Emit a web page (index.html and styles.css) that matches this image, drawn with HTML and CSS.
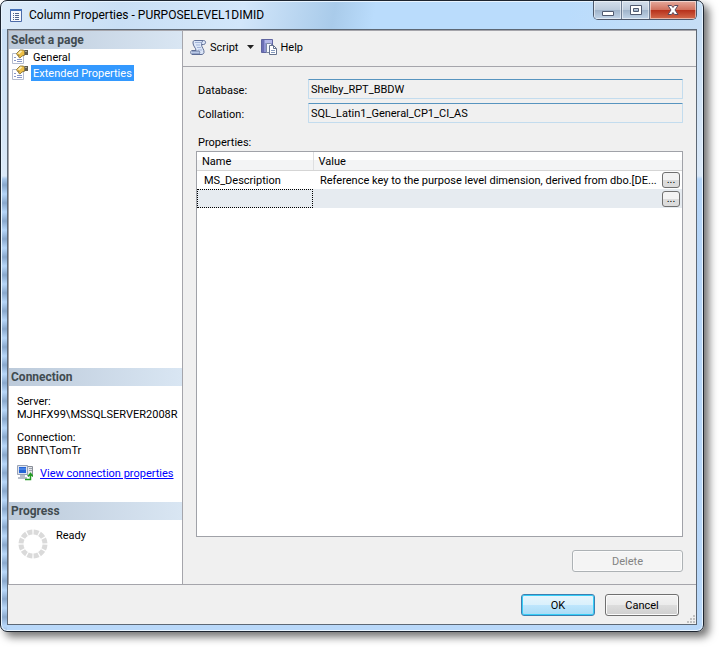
FILE: index.html
```html
<!DOCTYPE html>
<html lang="en">
<head>
    <meta charset="UTF-8">
    <meta name="viewport" content="width=device-width, initial-scale=1.0">
    <title>Column Properties - PURPOSELEVEL1DIMID</title>
    <link rel="stylesheet" href="styles.css">
</head>
<body>
    <!-- page icon, used by each entry of the page list -->
    <svg class="defs" width="0" height="0">
        <symbol id="page-icon" viewBox="0 0 16 16">
            <path d="M.5 4.500h11v10H.5z" fill="#fff" stroke="#b4bccf"/>
            <path d="M2 8.500h2M2 11.500h2M5 10.500h5M5 12.500h5" stroke="#8796c6"/>
            <path d="M4.500 4.500 8 1h3l2 1v4l-3 1-2 2-1.500-1L7 6 5.500 6.500z" fill="#eebf45" stroke="#7c682f" stroke-width=".8"/>
            <path d="M5.500 4.500 8.500 1.500l2 .5L7.500 5z" fill="#fbeeb8"/>
            <path d="M12.500 1H16v5h-3.500z" fill="#5f5b4e"/>
            <path d="M13 2h2v1h-2z" fill="#a8a698"/>
        </symbol>
    </svg>
    <div class="window">
        <header class="titlebar">
            <svg class="app-icon" width="13" height="13" viewBox="0 0 13 13">
                <path d="M.5.5h11v12H.5z" fill="#f7f9fd" stroke="#4c6ba8"/>
                <path d="M0 0h12v2H0z" fill="#4470b8"/>
                <path d="M3 4.500h1M3 6.500h1M3 8.500h1M3 10.500h1M5 4.500h4M5 6.500h4M5 8.500h4M5 10.500h4" stroke="#52658c"/>
            </svg>
            <h1>Column Properties - PURPOSELEVEL1DIMID</h1>
            <div class="caption-buttons">
                <button class="caption" aria-label="Minimize">
                    <svg width="14" height="14" viewBox="0 0 14 14"><path d="M1.500 8.500h11v4h-11z" fill="#fff" stroke="#505a70"/></svg>
                </button>
                <button class="caption" aria-label="Maximize">
                    <svg width="14" height="14" viewBox="0 0 14 14"><path d="M1.500 2.500h11v9h-11zM4.500 5.500h5v3h-5z" fill="#fff" fill-rule="evenodd" stroke="#505a70"/></svg>
                </button>
                <button class="caption close" aria-label="Close">
                    <svg width="14" height="14" viewBox="0 0 14 14"><path d="M2 2.500h3.500L7 4.500l1.500-2H12L9 7l3 4.500H8.500L7 9.500l-1.500 2H2L5 7z" fill="#fff" stroke="#5a4a5c"/></svg>
                </button>
            </div>
        </header>

        <div class="client">
            <div class="main">
                <aside class="sidebar">
                    <section class="pages">
                        <h2>Select a page</h2>
                        <ul>
                            <li><svg width="16" height="16"><use href="#page-icon"/></svg><a href="#general">General</a></li>
                            <li><svg width="16" height="16"><use href="#page-icon"/></svg><a class="selected" href="#extended">Extended Properties</a></li>
                        </ul>
                    </section>
                    <section class="connection">
                        <h2>Connection</h2>
                        <dl>
                            <dt>Server:</dt>
                            <dd>MJHFX99\MSSQLSERVER2008R</dd>
                            <dt>Connection:</dt>
                            <dd>BBNT\TomTr</dd>
                        </dl>
                        <div class="view-link">
                            <svg width="16" height="16" viewBox="0 0 16 16">
                                <path d="M10.500 1.500h5v9h-5z" fill="#e4e6ea" stroke="#8a8f99"/>
                                <path d="M12 3.500h3M12 5.500h3" stroke="#9aa0ac"/>
                                <path d="M.5.5h10v9H.5z" fill="#dfe5ef" stroke="#98a2b5"/>
                                <path d="M2 2h7v6H2z" fill="#2563d6"/>
                                <path d="M2 4h7" stroke="#69a2f4"/>
                                <path d="M3 10h5v2H3zM1 12h9v2H1z" fill="#b9bfca"/>
                                <path d="M8 14.500h5.500V9M11 11.500l2.500-3 2.500 3" fill="none" stroke="#239b23" stroke-width="1.500"/>
                            </svg>
                            <a href="#connection">View connection properties</a>
                        </div>
                    </section>
                    <section class="progress">
                        <h2>Progress</h2>
                        <div class="status">
                            <svg width="30" height="30" viewBox="0 0 30 30">
                                <circle cx="15" cy="15" r="12" pathLength="120" fill="none" stroke="#dadada" stroke-width="5" stroke-dasharray="8 2" stroke-dashoffset="-1"/>
                            </svg>
                            <span>Ready</span>
                        </div>
                    </section>
                </aside>

                <main class="content">
                    <div class="toolbar">
                        <button class="tool">
                            <svg width="17" height="16" viewBox="0 0 17 16">
                                <path d="M4.500 1.500h9c3 0 2.500 4 0 4h-2c0 3 3 5 2.500 8-.3 1.500-1.500 2-3 2H2c-2-1-1.500-4 0-4h4C6 9 3 7 3 4c0-1.500.5-2.500 1.500-2.500z" fill="#dce6f8" stroke="#5c6c94"/>
                                <path d="M5 3.500h6M6 6h4M7 8.500h4M8 11h4" stroke="#a3b5d8"/>
                                <path d="M2 12h7c1 0 1 3 0 3H2M13 2c-1.500.5-1.500 2-1.500 3.500" fill="#b9c9e8" stroke="#5c6c94" stroke-width=".8"/>
                            </svg>
                            Script
                            <svg class="arrow" width="7" height="4" viewBox="0 0 7 4"><path d="M0 0h7L3.500 4z" fill="#222"/></svg>
                        </button>
                        <button class="tool">
                            <svg width="16" height="16" viewBox="0 0 16 16">
                                <path d="M.5.5h11v13H.5z" fill="#8f94d2" stroke="#5f64a0"/>
                                <path d="M1 1h2v12H1z" fill="#6a6fb4"/>
                                <path d="M4 1h7v3H4z" fill="#b4b8e8"/>
                                <path d="M5.500 4.500h4l2 2v7h-6z" fill="#f4f7fc" stroke="#7d8aa6"/>
                                <path d="M8.500 6.500h4l3 3v6h-7z" fill="#fff" stroke="#66738e"/>
                                <path d="M12.500 6.500v3h3" fill="none" stroke="#66738e"/>
                                <path d="M10 11.500h4M10 13.500h4" stroke="#8499bd"/>
                            </svg>
                            Help
                        </button>
                    </div>
                    <form class="properties">
                        <div class="field">
                            <label for="database">Database:</label>
                            <input id="database" type="text" value="Shelby_RPT_BBDW" readonly>
                        </div>
                        <div class="field">
                            <label for="collation">Collation:</label>
                            <input id="collation" type="text" value="SQL_Latin1_General_CP1_CI_AS" readonly>
                        </div>
                        <h3 id="properties-label">Properties:</h3>
                        <div class="grid">
                            <table aria-labelledby="properties-label">
                                <colgroup>
                                    <col class="col-name">
                                    <col>
                                    <col class="col-more">
                                </colgroup>
                                <thead>
                                    <tr><th class="name">Name</th><th colspan="2">Value</th></tr>
                                </thead>
                                <tbody>
                                    <tr>
                                        <td>MS_Description</td>
                                        <td>Reference key to the purpose level dimension, derived from dbo.[DE...</td>
                                        <td class="more"><button type="button">...</button></td>
                                    </tr>
                                    <tr class="new">
                                        <td class="focused"></td>
                                        <td></td>
                                        <td class="more"><button type="button">...</button></td>
                                    </tr>
                                </tbody>
                            </table>
                        </div>
                        <button class="btn delete" type="button" disabled>Delete</button>
                    </form>
                </main>
            </div>

            <footer class="footer">
                <button class="btn ok">OK</button>
                <button class="btn">Cancel</button>
                <svg class="grip" width="8" height="8" viewBox="0 0 8 8">
                    <path d="M6 0h2v2H6zM3 3h2v2H3zM6 3h2v2H6zM0 6h2v2H0zM3 6h2v2H3zM6 6h2v2H6z" fill="#c2c2c2"/>
                </svg>
            </footer>
        </div>
    </div>
</body>
</html>
```

FILE: styles.css
```css
* {
    box-sizing: border-box;
}
body {
    margin: 0;
    padding: 0 16px 16px 0;
    min-height: 100vh;
    display: flex;
    background-color: #fff;
    color: #000;
    font-family: Roboto, "Liberation Sans", Arial, sans-serif;
    font-size: 11px;
    line-height: 13px;
}
h1, h2, h3, ul, dl, dd {
    margin: 0;
    padding: 0;
    font-weight: normal;
}
button, input {
    font: inherit;
    color: inherit;
}
svg {
    flex: none;
}
.defs {
    position: absolute;
}

/* window frame, the glass shows blurred stripes on the left */
.window {
    flex: 1;
    min-width: 0;
    display: flex;
    flex-direction: column;
    padding: 0 6px 6px;
    border: 1px solid #1d2530;
    border-radius: 7px;
    background:
        linear-gradient(100deg, #dcebf9 0, #c9dff5 120px, #d2e6fa 240px, #a9cbea 330px, #badcfc 370px, #badcfc 560px, #c6def5 100%) top / 100% 28px no-repeat,
        repeating-linear-gradient(to bottom, rgba(70, 100, 140, 0) 0, rgba(70, 100, 140, 0.4) 9px, rgba(70, 100, 140, 0) 18px) 0 175px / 6px 100% no-repeat,
        linear-gradient(to bottom, #c4dcf4 0, #dbe9f8 175px, #b5d5f8 178px, #b9d8f9 100%);
    box-shadow: inset 0 0 0 1px #e8f4ff, 5px 5px 9px rgba(0, 0, 0, 0.55);
}
.titlebar {
    height: 28px;
    display: flex;
    align-items: flex-start;
    padding-left: 3px;
}
.app-icon {
    margin-top: 8px;
}
h1 {
    flex: 1;
    margin: 6px 0 0 6px;
    font-family: Roboto, "Open Sans", sans-serif;
    font-size: 12px;
    line-height: 16px;
    white-space: nowrap;
}
.caption-buttons {
    display: flex;
    border: 1px solid #4d586b;
    border-top: 0;
    border-radius: 0 0 5px 5px;
    overflow: hidden;
}
.caption {
    width: 28px;
    height: 18px;
    padding: 0;
    border: 0;
    border-right: 1px solid #6d7c92;
    background: linear-gradient(to bottom, #d4dfec 0, #bccbdc 50%, #9eb2c9 50%, #c2d5e9 100%);
    box-shadow: inset 0 0 0 1px rgba(255, 255, 255, 0.5);
}
.caption svg {
    display: block;
    margin: auto;
}
.caption.close {
    width: 46px;
    border-right: 0;
    background: linear-gradient(to bottom, #e5aa9d 0, #d0705c 50%, #b62f1a 50%, #d46b4c 100%);
}
.client {
    flex: 1;
    display: flex;
    flex-direction: column;
    border: 1px solid #5d6875;
    background-color: #f0f0f0;
}
.main {
    flex: 1;
    display: flex;
    border: 1px solid #a5a5ab;
    border-width: 1px 0;
}

/* left side */
.sidebar {
    width: 175px;
    flex: none;
    display: flex;
    flex-direction: column;
    border: 1px solid #a5a5ab;
    border-width: 0 1px;
    background-color: #fff;
}
.pages {
    flex: 1;
}
.connection {
    height: 134px;
}
.progress {
    height: 82px;
}
h2 {
    height: 18px;
    padding-left: 2px;
    background: linear-gradient(to right, #bccada, #d9e6f3);
    color: #414b50;
    font-size: 12px;
    font-weight: bold;
    line-height: 18px;
}
ul {
    list-style: none;
}
li {
    display: flex;
    height: 16px;
    padding-left: 3px;
    gap: 3px;
}
li a {
    padding: 1px 2px 0;
    color: #000;
    line-height: 15px;
    text-decoration: none;
}
li a.selected {
    background-color: #3399ff;
    color: #fff;
}
dl {
    padding: 9px 3px 0 8px;
}
dd {
    margin-bottom: 10px;
    overflow: hidden;
    white-space: nowrap;
}
dd:last-child {
    margin-bottom: 8px;
}
.view-link {
    display: flex;
    align-items: center;
    gap: 7px;
    padding-left: 8px;
}
.view-link a {
    color: #0000ff;
}
.status {
    display: flex;
    gap: 8px;
    padding: 9px 0 0 9px;
}

/* right side */
.content {
    flex: 1;
    min-width: 0;
    display: flex;
    flex-direction: column;
}
.toolbar {
    height: 36px;
    display: flex;
    align-items: center;
    gap: 7px;
    padding: 0 7px 3px;
    border-bottom: 1px solid #a5a5ab;
}
.tool {
    display: flex;
    align-items: center;
    gap: 3px;
    padding: 0;
    border: 0;
    background: none;
}
.arrow {
    margin-left: 6px;
}
.properties {
    flex: 1;
    display: flex;
    flex-direction: column;
    padding: 12px 13px;
}
.field {
    display: flex;
    align-items: center;
    margin-bottom: 4px;
}
.field label {
    width: 112px;
    flex: none;
    padding: 2px 0 0 2px;
}
.field input {
    flex: 1;
    min-width: 0;
    height: 20px;
    padding: 0 2px;
    border: 1px solid #c3dcee;
    border-top-color: #5794bf;
    border-radius: 1px;
    background-color: #f0f0f0;
}
h3 {
    margin: 9px 0 2px 2px;
    font-size: 11px;
}
.grid {
    flex: 1;
    border: 1px solid #a0a2a8;
    background-color: #fff;
}
table {
    width: 100%;
    border-collapse: collapse;
    table-layout: fixed;
}
.col-name {
    width: 116px;
}
.col-more {
    width: 22px;
}
th {
    height: 18px;
    padding: 1px 5px 0;
    border-bottom: 1px solid #d5d5d5;
    background: linear-gradient(to bottom, #fff 45%, #f3f4f5 45%);
    font-weight: normal;
    text-align: left;
}
th.name {
    border-right: 1px solid #dedfe1;
}
td {
    height: 19px;
    padding: 1px 0 0 7px;
    white-space: nowrap;
}
.new td {
    background-color: #e6ebf0;
}
.new td.focused {
    outline: 1px dotted #000;
    outline-offset: -1px;
}
td.more {
    padding: 0;
    text-align: right;
}
.more button {
    display: block;
    width: 18px;
    height: 16px;
    margin: 0 2px 0 auto;
    padding: 0;
    border: 1px solid #707070;
    border-radius: 3px;
    background: linear-gradient(to bottom, #f3f3f3 50%, #dcdcdc 50%);
}
.btn {
    width: 74px;
    height: 22px;
    padding: 0;
    border: 1px solid #707070;
    border-radius: 3px;
    background: linear-gradient(to bottom, #f3f3f3 0, #ebebeb 50%, #dddddd 50%, #cfcfcf 100%);
    box-shadow: inset 0 0 0 1px #fbfbfb;
}
.btn.ok {
    border-color: #3c7fb1;
    background: linear-gradient(to bottom, #e8f5fc 0, #d9f0fc 50%, #bee6fd 50%, #a9dbf5 100%);
    box-shadow: inset 0 0 0 1px #36cdf7;
}
.btn.delete {
    width: 111px;
    align-self: flex-end;
    margin-top: 13px;
    border-color: #adb2b5;
    background: #f4f4f4;
    color: #838383;
}
.footer {
    position: relative;
    display: flex;
    justify-content: flex-end;
    gap: 10px;
    padding: 9px 17px 8px 0;
}
.grip {
    position: absolute;
    right: 1px;
    bottom: 1px;
}
```
